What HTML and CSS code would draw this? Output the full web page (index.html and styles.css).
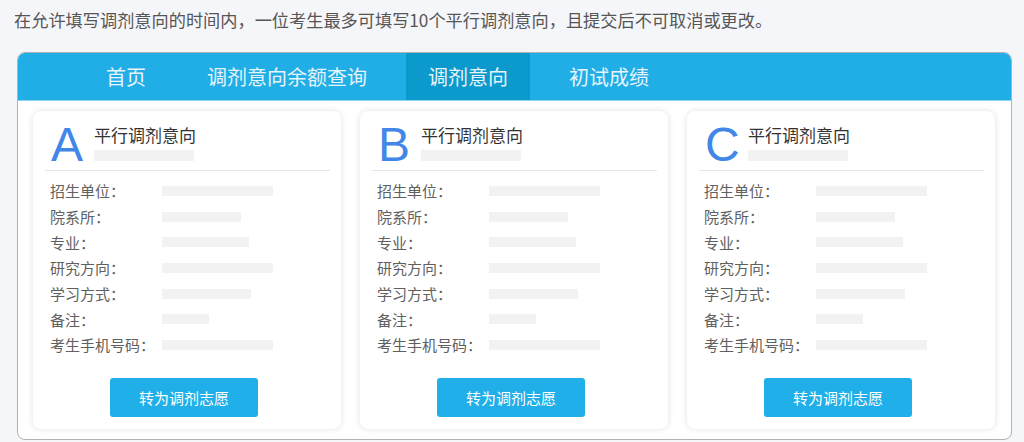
FILE: index.html
```html
<!DOCTYPE html>
<html lang="zh-CN">
<head>
    <meta charset="UTF-8">
    <title>调剂意向</title>
    <link rel="stylesheet" href="styles.css">
</head>
<body>
    <!-- Notice -->
    <p class="intro">在允许填写调剂意向的时间内，一位考生最多可填写10个平行调剂意向，且提交后不可取消或更改。</p>

    <div class="panel">
        <!-- Tabs -->
        <ul class="nav">
            <li>首页</li>
            <li>调剂意向余额查询</li>
            <li class="active">调剂意向</li>
            <li>初试成绩</li>
        </ul>

        <!-- Cards -->
        <div class="cards">
            <div class="card">
                <div class="card-head">
                    <span class="letter">A</span>
                    <div class="head-text">
                        <h3>平行调剂意向</h3>
                        <span class="bar head-bar"></span>
                    </div>
                </div>
                <ul class="rows">
                    <li><span class="label">招生单位：</span><span class="bar" style="width:111px"></span></li>
                    <li><span class="label">院系所：</span><span class="bar" style="width:79px"></span></li>
                    <li><span class="label">专业：</span><span class="bar" style="width:87px"></span></li>
                    <li><span class="label">研究方向：</span><span class="bar" style="width:111px"></span></li>
                    <li><span class="label">学习方式：</span><span class="bar" style="width:89px"></span></li>
                    <li><span class="label">备注：</span><span class="bar" style="width:47px"></span></li>
                    <li><span class="label">考生手机号码：</span><span class="bar" style="width:111px"></span></li>
                </ul>
                <div class="actions"><button class="btn">转为调剂志愿</button></div>
            </div>

            <div class="card">
                <div class="card-head">
                    <span class="letter">B</span>
                    <div class="head-text">
                        <h3>平行调剂意向</h3>
                        <span class="bar head-bar"></span>
                    </div>
                </div>
                <ul class="rows">
                    <li><span class="label">招生单位：</span><span class="bar" style="width:111px"></span></li>
                    <li><span class="label">院系所：</span><span class="bar" style="width:79px"></span></li>
                    <li><span class="label">专业：</span><span class="bar" style="width:87px"></span></li>
                    <li><span class="label">研究方向：</span><span class="bar" style="width:111px"></span></li>
                    <li><span class="label">学习方式：</span><span class="bar" style="width:89px"></span></li>
                    <li><span class="label">备注：</span><span class="bar" style="width:47px"></span></li>
                    <li><span class="label">考生手机号码：</span><span class="bar" style="width:111px"></span></li>
                </ul>
                <div class="actions"><button class="btn">转为调剂志愿</button></div>
            </div>

            <div class="card">
                <div class="card-head">
                    <span class="letter">C</span>
                    <div class="head-text">
                        <h3>平行调剂意向</h3>
                        <span class="bar head-bar"></span>
                    </div>
                </div>
                <ul class="rows">
                    <li><span class="label">招生单位：</span><span class="bar" style="width:111px"></span></li>
                    <li><span class="label">院系所：</span><span class="bar" style="width:79px"></span></li>
                    <li><span class="label">专业：</span><span class="bar" style="width:87px"></span></li>
                    <li><span class="label">研究方向：</span><span class="bar" style="width:111px"></span></li>
                    <li><span class="label">学习方式：</span><span class="bar" style="width:89px"></span></li>
                    <li><span class="label">备注：</span><span class="bar" style="width:47px"></span></li>
                    <li><span class="label">考生手机号码：</span><span class="bar" style="width:111px"></span></li>
                </ul>
                <div class="actions"><button class="btn">转为调剂志愿</button></div>
            </div>
        </div>
    </div>
</body>
</html>
```

FILE: styles.css
```css
/* General Reset */
* {
    margin: 0;
    padding: 0;
    box-sizing: border-box;
    font-family: "Noto Sans CJK SC", "Noto Sans", sans-serif;
}

body {
    background-color: #F5F6FA;
    color: #555555;
}

/* Notice */
.intro {
    margin: 8px 0 0 14px;
    font-size: 17.2px;
    line-height: 24px;
    color: #555555;
}

/* Panel */
.panel {
    width: 995px;
    margin: 20px 0 0 17px;
    border: 1px solid #B2B2B2;
    border-radius: 8px;
    background-color: #FFFFFF;
    overflow: hidden;
}

/* Tabs */
.nav {
    display: flex;
    gap: 17px;
    list-style: none;
    height: 48px;
    padding-left: 66px;
    background-color: #21AEE6;
    border-bottom: 1px solid #8FD4F1;
}

.nav li {
    padding: 0 22px;
    font-size: 20px;
    line-height: 47px;
    color: #E6F4FB;
}

.nav li.active {
    background-color: #0C99CC;
}

/* Cards */
.cards {
    display: grid;
    grid-template-columns: repeat(3, 308px);
    gap: 19px;
    padding: 10px 16px 10px 15px;
}

.card {
    padding: 10px 11px 12px 12px;
    border-radius: 8px;
    background-color: #FFFFFF;
    box-shadow: 0 0 6px rgba(0, 0, 0, 0.12);
}

.card-head {
    display: flex;
    padding: 0 0 1px 6px;
    border-bottom: 1px solid #E6E6E6;
}

.letter {
    width: 43px;
    font-family: "Liberation Sans", Arial, sans-serif;
    font-size: 48px;
    line-height: 48px;
    color: #4286E8;
}

.head-text {
    display: flex;
    flex-direction: column;
    padding-top: 3px;
}

.head-text h3 {
    font-size: 17px;
    font-weight: normal;
    line-height: 22px;
    color: #333333;
}

.bar {
    display: block;
    height: 10px;
    background-color: #F2F2F2;
}

.head-bar {
    width: 100px;
    height: 11px;
    margin-top: 4px;
}

/* Info rows */
.rows {
    list-style: none;
    margin-top: 7px;
    padding-left: 5px;
}

.rows li {
    display: flex;
    align-items: center;
    height: 25.7px;
}

.label {
    width: 112px;
    font-size: 15px;
    color: #606060;
}

/* Button */
.actions {
    display: flex;
    justify-content: center;
    margin-top: 20px;
    padding-right: 7px;
}

.btn {
    width: 148px;
    height: 39px;
    border: none;
    border-radius: 3px;
    background-color: #20AFE8;
    color: #FFFFFF;
    font-size: 15px;
    cursor: pointer;
}
```
